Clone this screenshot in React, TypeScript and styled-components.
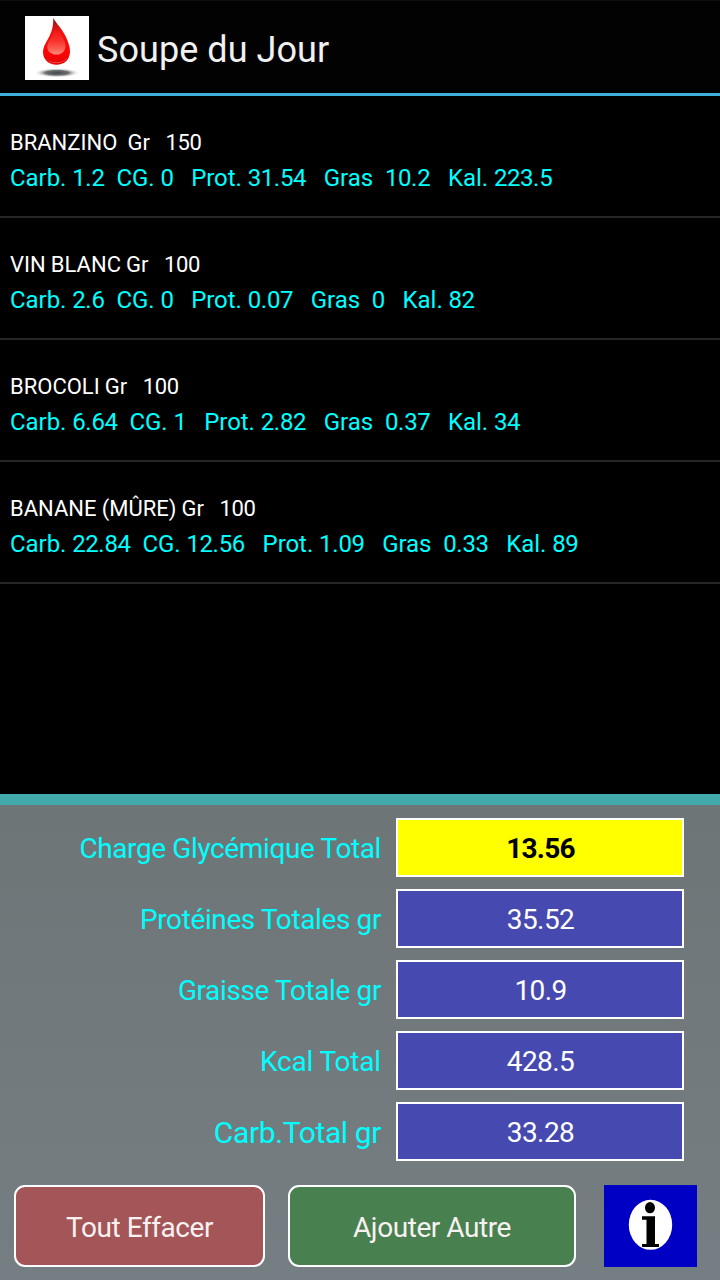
import React from "react";
import styled, { createGlobalStyle } from "styled-components";

const GlobalStyle = createGlobalStyle`
  * { box-sizing: border-box; }
  html, body { margin: 0; padding: 0; background: #000; }
  body { font-family: Roboto, "Liberation Sans", sans-serif; }
`;

const Screen = styled.div`
  width: 720px;
  height: 1280px;
  display: flex;
  flex-direction: column;
  background: #000;
  overflow: hidden;
`;

const Header = styled.header`
  height: 96px;
  flex: none;
  display: flex;
  align-items: center;
  gap: 8px;
  padding: 2px 0 0 25px;
  border-top: 1px solid #0d1011;
  border-bottom: 3px solid #3fb0dc;
  background: #020203;
`;

const Logo = styled.svg`
  display: block;
  width: 64px;
  height: 64px;
`;

const Title = styled.h1`
  margin: 0;
  padding-top: 3px;
  font-size: 36px;
  line-height: 42px;
  font-weight: 400;
  letter-spacing: 0.06px;
  color: #f1f1f1;
`;

const FoodList = styled.ul`
  flex: 1;
  margin: 0;
  padding: 0;
  list-style: none;
`;

const FoodRow = styled.li`
  height: 122px;
  padding: 33px 10px 0;
  border-bottom: 2px solid #262626;
  white-space: pre;
`;

const Digits = styled.span<{ $tracking: number }>`
  letter-spacing: ${(p) => p.$tracking}px;
`;

const FoodName = styled.div`
  font-size: 22px;
  line-height: 27px;
  word-spacing: -0.3px;
  color: #fff;
`;

const FoodFacts = styled.div`
  margin-top: 7px;
  font-size: 24px;
  line-height: 30px;
  letter-spacing: -0.05px;
  color: #00ffff;
`;

const Summary = styled.section`
  flex: none;
  height: 486px;
  border-top: 11px solid #43aaac;
  background: linear-gradient(#6e7577, #757e82);
`;

const Totals = styled.div`
  display: flex;
  flex-direction: column;
  gap: 12px;
  padding: 13px 36px 0 0;
`;

const TotalRow = styled.div`
  display: flex;
  align-items: center;
  justify-content: flex-end;
  gap: 15px;
  height: 59px;
`;

const TotalLabel = styled.span<{ $large?: boolean; $tracking?: number }>`
  padding-top: 2px;
  font-size: ${(p) => (p.$large ? 30 : 28)}px;
  line-height: 34px;
  letter-spacing: ${(p) => p.$tracking ?? -0.39}px;
  color: #00ffff;
  white-space: nowrap;
`;

const TotalValue = styled.output<{ $highlight?: boolean }>`
  width: 288px;
  height: 59px;
  display: flex;
  align-items: center;
  justify-content: center;
  padding: 1px 0 0 1px;
  border: 2px solid #fff;
  font-size: 28px;
  font-weight: ${(p) => (p.$highlight ? 700 : 400)};
  letter-spacing: ${(p) => (p.$highlight ? -0.8 : -0.6)}px;
  color: ${(p) => (p.$highlight ? "#000" : "#fff")};
  background: ${(p) => (p.$highlight ? "#ffff00" : "#464ab0")};
`;

const Actions = styled.div`
  display: flex;
  padding: 24px 0 0 14px;
`;

const ActionButton = styled.button<{ $width: number; $color: string; $gap: number }>`
  width: ${(p) => p.$width}px;
  height: 82px;
  margin: 0 ${(p) => p.$gap}px 0 0;
  padding: 3px 0 0;
  border: 2px solid #fff;
  border-radius: 11px;
  background: ${(p) => p.$color};
  color: #f8f1f1;
  font-family: inherit;
  font-size: 28px;
  letter-spacing: -0.44px;
`;

const InfoButton = styled.button`
  width: 93px;
  height: 82px;
  padding: 0;
  border: 0;
  background: #0000c4;
`;

const InfoIcon = styled.svg`
  display: block;
  width: 93px;
  height: 82px;
`;

const foods = [
  { name: "BRANZINO  Gr   150", facts: "Carb. 1.2  CG. 0   Prot. 31.54   Gras  10.2   Kal. 223.5" },
  { name: "VIN BLANC Gr   100", facts: "Carb. 2.6  CG. 0   Prot. 0.07   Gras  0   Kal. 82" },
  { name: "BROCOLI Gr   100", facts: "Carb. 6.64  CG. 1   Prot. 2.82   Gras  0.37   Kal. 34" },
  { name: "BANANE (MÛRE) Gr   100", facts: "Carb. 22.84  CG. 12.56   Prot. 1.09   Gras  0.33   Kal. 89" },
];

const totals = [
  { label: "Charge Glycémique Total", value: "13.56", highlight: true },
  { label: "Protéines Totales gr", value: "35.52" },
  { label: "Graisse Totale gr", value: "10.9" },
  { label: "Kcal Total", value: "428.5", tracking: -0.18 },
  { label: "Carb.Total gr", value: "33.28", large: true },
];

/* Sets the numbers inside a line slightly tighter than its words. */
function NumberedText({ text, tracking }: { text: string; tracking: number }) {
  return (
    <>
      {text.split(/(\d+)/).map((part, i) =>
        i % 2 ? (
          <Digits key={i} $tracking={tracking}>
            {part}
          </Digits>
        ) : (
          part
        )
      )}
    </>
  );
}

function DropLogo() {
  return (
    <Logo viewBox="0 0 64 64" aria-hidden="true">
      <defs>
        <linearGradient id="dropBody" x1="0" y1="0" x2="0" y2="1">
          <stop offset="0" stopColor="#5a0a0a" />
          <stop offset="0.13" stopColor="#c01212" />
          <stop offset="0.3" stopColor="#f01414" />
          <stop offset="0.75" stopColor="#fb0505" />
          <stop offset="1" stopColor="#e00808" />
        </linearGradient>
        <linearGradient id="dropGlow" x1="0" y1="0" x2="0" y2="1">
          <stop offset="0" stopColor="#f43a34" stopOpacity="0" />
          <stop offset="0.5" stopColor="#fa5044" stopOpacity="0.6" />
          <stop offset="1" stopColor="#ff9a88" stopOpacity="0.9" />
        </linearGradient>
        <radialGradient id="dropShadow">
          <stop offset="0" stopColor="#44494c" />
          <stop offset="0.5" stopColor="#6c7073" />
          <stop offset="1" stopColor="#fff" stopOpacity="0" />
        </radialGradient>
      </defs>
      <rect width="64" height="64" fill="#fff" />
      <ellipse cx="32" cy="56.8" rx="23" ry="4.8" fill="url(#dropShadow)" />
      <path
        d="M28.3 2C31.5 8 37 12.5 41 21C43.5 26.5 45 31 45 35.5C45 43.5 39.3 48.8 31.5 48.8C23.7 48.8 18 43.5 18 36C18 30.5 21.5 26 24.5 20C27.5 14 28.5 8 28.3 2Z"
        fill="url(#dropBody)"
      />
      <path
        d="M30.5 12C35 17 40.5 24 40.5 30C40.5 35.3 36.8 38.6 31.6 38.6C26 38.6 22.3 35.3 22.3 31C22.3 25 28.5 20 30.5 12Z"
        fill="url(#dropGlow)"
      />
      <path d="M21.5 42.5C25 47.8 37 48.3 42 42C38.5 48.6 25 48.8 21.5 42.5Z" fill="#ff9a88" opacity="0.7" />
    </Logo>
  );
}

export default function App() {
  return (
    <>
      <GlobalStyle />
      <Screen>
        <Header>
          <DropLogo />
          <Title>Soupe du Jour</Title>
        </Header>
        <FoodList>
          {foods.map((food) => (
            <FoodRow key={food.name}>
              <FoodName>
                <NumberedText text={food.name} tracking={-0.36} />
              </FoodName>
              <FoodFacts>
                <NumberedText text={food.facts} tracking={-0.48} />
              </FoodFacts>
            </FoodRow>
          ))}
        </FoodList>
        <Summary>
          <Totals>
            {totals.map((t) => (
              <TotalRow key={t.label}>
                <TotalLabel $large={t.large} $tracking={t.tracking}>{t.label}</TotalLabel>
                <TotalValue $highlight={t.highlight}>{t.value}</TotalValue>
              </TotalRow>
            ))}
          </Totals>
          <Actions>
            <ActionButton $width={251} $color="#a45558" $gap={23}>Tout Effacer</ActionButton>
            <ActionButton $width={288} $color="#48804f" $gap={28}>Ajouter Autre</ActionButton>
            <InfoButton aria-label="Info">
              <InfoIcon viewBox="0 0 93 82" aria-hidden="true">
                <ellipse cx="46.5" cy="39.8" rx="21.7" ry="25" fill="#fff" />
                <ellipse cx="46" cy="22.7" rx="5" ry="5.6" fill="#000" />
                <path d="M38 31.3H51V59H55V62H38V59H42.5V34.8H38Z" fill="#000" />
              </InfoIcon>
            </InfoButton>
          </Actions>
        </Summary>
      </Screen>
    </>
  );
}
